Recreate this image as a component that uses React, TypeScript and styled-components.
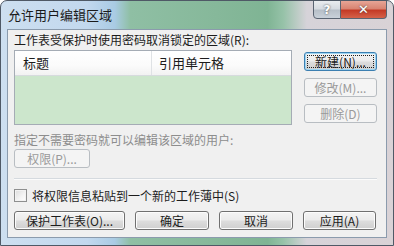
import React from 'react'
import styled, { createGlobalStyle } from 'styled-components'

const Global = createGlobalStyle`
  html, body { margin: 0; padding: 0; background: #fff; }
  body { font-family: "Noto Sans CJK SC", "Noto Sans", sans-serif; }
`

const Frame = styled.div`
  width: 394px;
  height: 246px;
  box-sizing: border-box;
  border: 1px solid #4f5966;
  border-radius: 7px 7px 0 0;
  background: linear-gradient(90deg, #cddff0 0%, #c2d8ee 22%, #a9cbe4 29%, #8fbfa4 33%, #86b89a 55%, #7fb494 68%, #96c2a8 72%, #d6d3d9 78%, #d9d2d6 100%);
  display: flex;
  flex-direction: column;
  overflow: hidden;
`

const TitleBar = styled.div`
  height: 28px;
  display: flex;
  align-items: flex-start;
  padding: 0 6px 0 7px;
  flex-shrink: 0;
`

const Title = styled.div`
  flex: 1;
  font-size: 13px;
  line-height: 28px;
  color: #1a1a1a;
`

const Caption = styled.div`
  display: flex;
  margin-top: -1px;
`

const CapButton = styled.div<{ $close?: boolean }>`
  width: ${p => (p.$close ? 46 : 28)}px;
  height: 19px;
  box-sizing: border-box;
  border: 1px solid #5a6472;
  border-left-width: ${p => (p.$close ? 0 : 1)}px;
  border-radius: ${p => (p.$close ? '0 0 4px 0' : '0 0 0 4px')};
  background: ${p =>
    p.$close
      ? 'linear-gradient(180deg, #e7a596 0%, #d98472 45%, #c43a26 55%, #d5624a 100%)'
      : 'linear-gradient(180deg, #e9ecef 0%, #d6dbe1 45%, #b7bfc8 55%, #c9d1da 100%)'};
  color: #fff;
  display: flex;
  align-items: center;
  justify-content: center;
  font-family: "DejaVu Sans", sans-serif;
  font-weight: bold;
  font-size: ${p => (p.$close ? 13 : 12)}px;
  text-shadow: 0 0 2px #3b3b3b;
`

const Client = styled.div`
  flex: 1;
  margin: 0 6px 7px 6px;
  box-sizing: border-box;
  border: 1px solid #8b9bad;
  background: #f0f0f0;
  padding: 3px 9px 0 6px;
  display: flex;
  flex-direction: column;
  font-size: 12px;
  color: #1c1c1c;
`

const Label = styled.div<{ $muted?: boolean }>`
  line-height: 14px;
  height: 14px;
  white-space: nowrap;
  color: ${p => (p.$muted ? '#8d8d8d' : '#1c1c1c')};
`

const ListRow = styled.div`
  display: flex;
  gap: 12px;
  margin-top: 3px;
`

const List = styled.div`
  width: 278px;
  height: 75px;
  box-sizing: border-box;
  border: 1px solid #a5acb5;
  background: #cce6cc;
  display: flex;
  flex-direction: column;
`

const ListHeader = styled.div`
  height: 24px;
  display: grid;
  grid-template-columns: 137px 1fr;
  background: linear-gradient(180deg, #ffffff 0%, #fbfbfb 60%, #f2f2f2 100%);
  border-bottom: 1px solid #d7dbde;
`

const HeaderCell = styled.div`
  font-size: 13px;
  line-height: 24px;
  padding-left: ${p => (p.$first ? 8 : 7)}px;
  border-right: ${p => (p.$first ? '1px solid #dfe2e5' : 'none')};
` as any

const SideButtons = styled.div`
  display: flex;
  flex-direction: column;
  gap: 7px;
  padding-top: 2px;
`

const Button = styled.div<{ $w: number; $disabled?: boolean; $default?: boolean }>`
  width: ${p => p.$w}px;
  height: 19px;
  box-sizing: border-box;
  border: 1px solid ${p => (p.$disabled ? '#b8bdc2' : p.$default ? '#3c7fb1' : '#707070')};
  border-radius: 3px;
  background: ${p =>
    p.$disabled
      ? '#f4f4f4'
      : 'linear-gradient(180deg, #f4f4f4 0%, #ebebeb 48%, #dddddd 52%, #cfcfcf 100%)'};
  box-shadow: ${p => (p.$disabled ? 'none' : p.$default ? 'inset 0 0 0 1px #9dd5f3' : 'inset 0 0 0 1px #fcfcfc')};
  color: ${p => (p.$disabled ? '#9a9a9a' : '#1c1c1c')};
  font-size: 12px;
  line-height: 17px;
  text-align: center;
  white-space: nowrap;
  position: relative;
`

const Focus = styled.span`
  position: absolute;
  inset: 2px;
  border: 1px dotted #202020;
`

const Perm = styled.div`
  margin-top: 2px;
`

const Separator = styled.div`
  margin-top: 10px;
  height: 1px;
  background: #d5dadf;
  border-bottom: 1px solid #fbfbfb;
`

const CheckRow = styled.div`
  margin-top: 8px;
  height: 14px;
  display: flex;
  align-items: center;
  gap: 5px;
  font-size: 12px;
  white-space: nowrap;
`

const Box = styled.div`
  width: 13px;
  height: 13px;
  box-sizing: border-box;
  border: 1px solid #8e8f8f;
  background: linear-gradient(135deg, #dcdcdc 0%, #f4f4f4 60%, #ffffff 100%);
  box-shadow: inset 0 0 0 1px #f2f2f2;
`

const Footer = styled.div`
  margin-top: 9px;
  display: flex;
  gap: 10px;
`

export default function App() {
  return (
    <>
      <Global />
      <Frame>
        <TitleBar>
          <Title>允许用户编辑区域</Title>
          <Caption>
            <CapButton>?</CapButton>
            <CapButton $close>✕</CapButton>
          </Caption>
        </TitleBar>
        <Client>
          <Label>工作表受保护时使用密码取消锁定的区域(R):</Label>
          <ListRow>
            <List>
              <ListHeader>
                <HeaderCell $first>标题</HeaderCell>
                <HeaderCell>引用单元格</HeaderCell>
              </ListHeader>
            </List>
            <SideButtons>
              <Button $w={73} $default>
                <Focus />
                新建(N)...
              </Button>
              <Button $w={73} $disabled>修改(M)...</Button>
              <Button $w={73} $disabled>删除(D)</Button>
            </SideButtons>
          </ListRow>
          <Label $muted style={{ marginTop: 8 }}>指定不需要密码就可以编辑该区域的用户:</Label>
          <Perm>
            <Button $w={76} $disabled>权限(P)...</Button>
          </Perm>
          <Separator />
          <CheckRow>
            <Box />
            将权限信息粘贴到一个新的工作薄中(S)
          </CheckRow>
          <Footer>
            <Button $w={111}>保护工作表(O)...</Button>
            <Button $w={74}>确定</Button>
            <Button $w={74}>取消</Button>
            <Button $w={73}>应用(A)</Button>
          </Footer>
        </Client>
      </Frame>
    </>
  )
}
